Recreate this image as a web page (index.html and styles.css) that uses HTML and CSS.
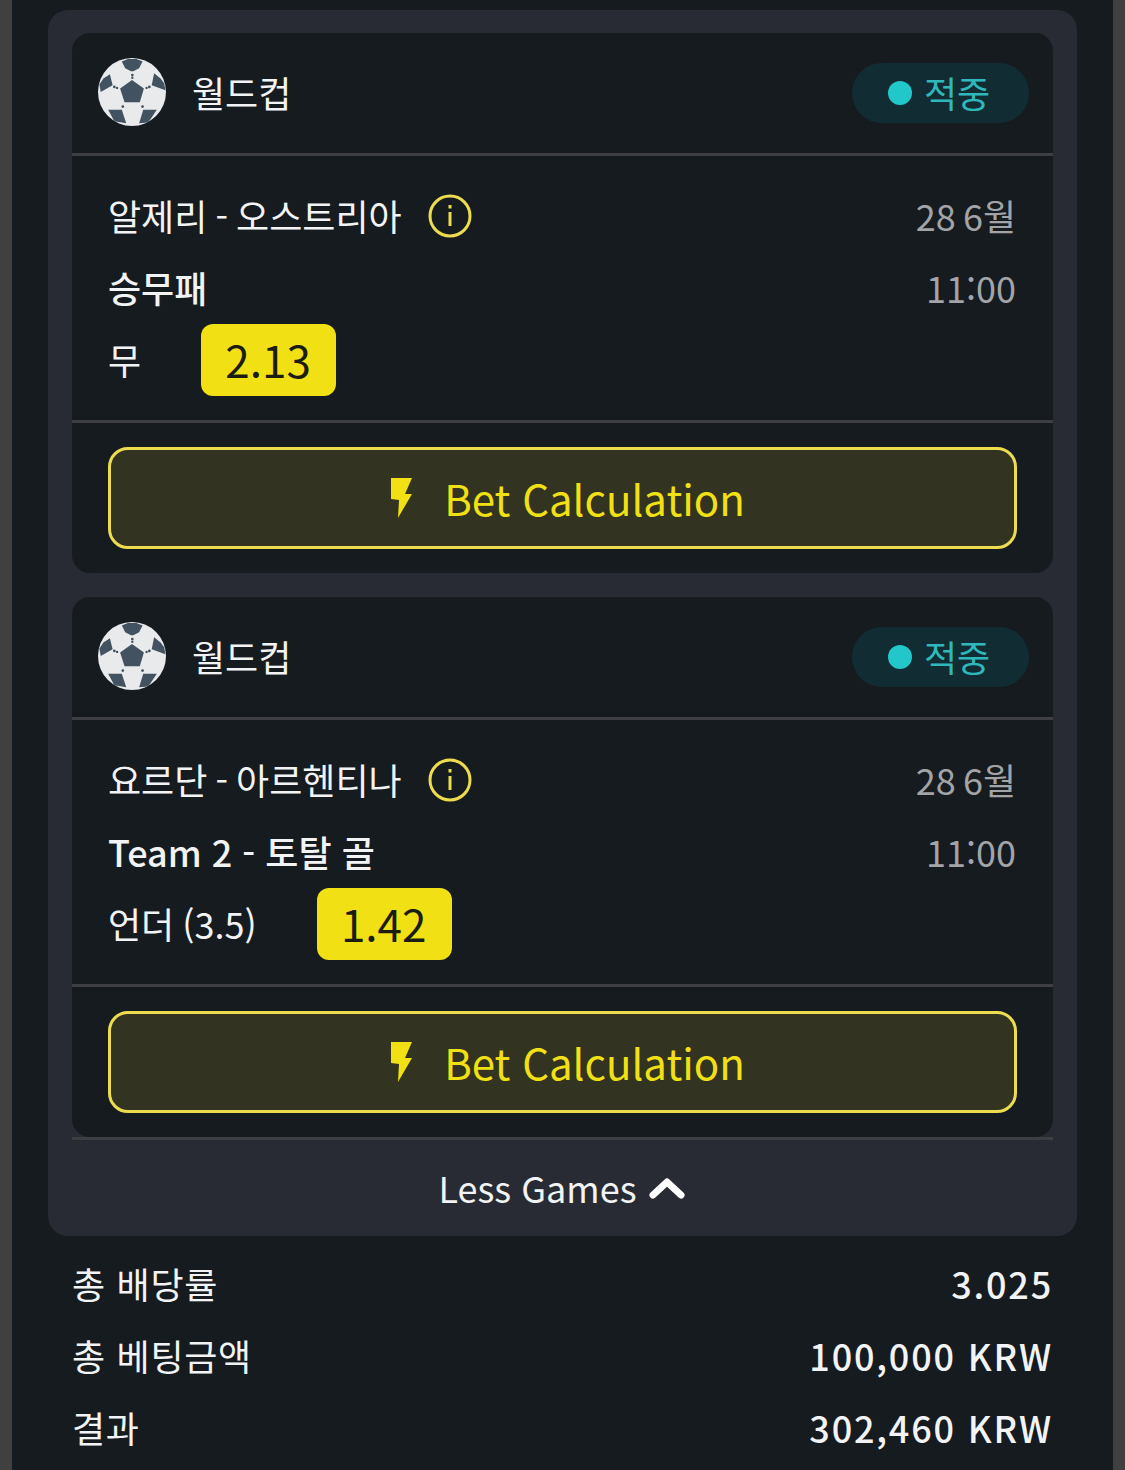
FILE: index.html
```html
<!DOCTYPE html>
<html lang="ko">
<head>
    <meta charset="UTF-8">
    <title>Bet Slip</title>
    <link rel="stylesheet" href="styles.css">
</head>
<body>
    <svg class="sprites" width="0" height="0">
        <symbol id="ball" viewBox="0 0 200 200">
            <clipPath id="ball-clip"><circle cx="100" cy="100" r="100"/></clipPath>
            <circle cx="100" cy="100" r="100" fill="#e9eaec"/>
            <g clip-path="url(#ball-clip)" fill="#435260">
                <polygon points="100,65 135,90 123,130 78,130 65,90"/>
                <polygon points="70,10 88,3 113,3 131,10 121,30 104,39 97,39 80,30"/>
                <polygon points="35,48 43,80 8,100 4,78 16,60"/>
                <polygon points="165,45 158,80 198,95 195,75 184,60"/>
                <polygon points="30,152 70,152 83,192 48,186"/>
                <polygon points="133,152 173,152 148,190 121,192"/>
                <circle cx="101" cy="50" r="4"/>
                <circle cx="101" cy="58" r="3.5"/>
                <circle cx="48" cy="85" r="4"/>
                <circle cx="56" cy="88" r="3.5"/>
                <circle cx="151" cy="85" r="4"/>
                <circle cx="143" cy="88" r="3.5"/>
                <circle cx="73" cy="143" r="4"/>
                <circle cx="131" cy="143" r="4"/>
            </g>
        </symbol>
    </svg>

    <div class="page">
        <div class="panel">
            <div class="match-card">
                <div class="card-head">
                    <svg class="ball"><use href="#ball"/></svg>
                    <span class="league">월드컵</span>
                    <span class="pill"><i class="pill-dot"></i><span class="pill-text">적중</span></span>
                </div>
                <div class="card-body">
                    <div class="row">
                        <div class="teams">
                            <span class="teams-name">알제리 - 오스트리아</span>
                            <svg class="info" viewBox="0 0 44 44">
                                <circle cx="22" cy="22" r="20" fill="none" stroke="#ecdc4e" stroke-width="3"/>
                                <rect x="20.5" y="11" width="3" height="3.5" fill="#ecdc4e"/>
                                <rect x="20.5" y="18" width="3" height="14" fill="#ecdc4e"/>
                            </svg>
                        </div>
                        <span class="date">28 6월</span>
                    </div>
                    <div class="row">
                        <span class="market">승무패</span>
                        <span class="date">11:00</span>
                    </div>
                    <div class="row row-pick">
                        <span class="pick">무</span>
                        <span class="odds">2.13</span>
                    </div>
                </div>
                <div class="card-foot">
                    <button class="calc-btn">
                        <svg class="bolt" viewBox="0 0 21 40"><polygon points="0,0 21,0 14,16 21,16 7,40 8,22 0,21"/></svg>
                        Bet Calculation
                    </button>
                </div>
            </div>

            <div class="match-card">
                <div class="card-head">
                    <svg class="ball"><use href="#ball"/></svg>
                    <span class="league">월드컵</span>
                    <span class="pill"><i class="pill-dot"></i><span class="pill-text">적중</span></span>
                </div>
                <div class="card-body">
                    <div class="row">
                        <div class="teams">
                            <span class="teams-name">요르단 - 아르헨티나</span>
                            <svg class="info" viewBox="0 0 44 44">
                                <circle cx="22" cy="22" r="20" fill="none" stroke="#ecdc4e" stroke-width="3"/>
                                <rect x="20.5" y="11" width="3" height="3.5" fill="#ecdc4e"/>
                                <rect x="20.5" y="18" width="3" height="14" fill="#ecdc4e"/>
                            </svg>
                        </div>
                        <span class="date">28 6월</span>
                    </div>
                    <div class="row">
                        <span class="market">Team 2 - 토탈 골</span>
                        <span class="date">11:00</span>
                    </div>
                    <div class="row row-pick">
                        <span class="pick">언더 (3.5)</span>
                        <span class="odds">1.42</span>
                    </div>
                </div>
                <div class="card-foot">
                    <button class="calc-btn">
                        <svg class="bolt" viewBox="0 0 21 40"><polygon points="0,0 21,0 14,16 21,16 7,40 8,22 0,21"/></svg>
                        Bet Calculation
                    </button>
                </div>
            </div>

            <div class="less-games">
                <span class="less-text">Less Games</span>
                <svg class="chevron" viewBox="0 0 36 22"><polyline points="4,18 18,5 32,18"/></svg>
            </div>
        </div>

        <div class="totals">
            <div class="total-row"><span>총 배당률</span><b>3.025</b></div>
            <div class="total-row"><span>총 베팅금액</span><b>100,000 KRW</b></div>
            <div class="total-row"><span>결과</span><b>302,460 KRW</b></div>
        </div>
    </div>
</body>
</html>
```

FILE: styles.css
```css
body {
    margin: 0;
    height: 1470px;
    overflow: hidden;
    background-color: #404040;
    font-family: "Noto Sans CJK KR", "Noto Sans", sans-serif;
    font-size: 36px;
    color: #f2f3f4;
}
.sprites {
    display: block;
    height: 0;
}
.page {
    margin: 0 12px;
    height: 1470px;
    padding: 10px 36px 0;
    box-sizing: border-box;
    background-color: #161b20;
}
.panel {
    background-color: #282b33;
    border-radius: 20px;
    padding: 23px 24px 0;
}
.match-card {
    background-color: #161b20;
    border-radius: 18px;
    margin-bottom: 24px;
}
.match-card:nth-child(2) {
    margin-bottom: 0;
}
.card-head {
    display: flex;
    align-items: center;
    height: 123px;
    padding: 0 24px 2px 26px;
    box-sizing: border-box;
    border-bottom: 3px solid #3d3f42;
}
.ball {
    width: 68px;
    height: 68px;
    margin-right: 26px;
}
.league {
    flex-grow: 1;
    padding-bottom: 1px;
}
.pill {
    display: flex;
    align-items: center;
    width: 177px;
    height: 60px;
    margin-top: 2px;
    box-sizing: border-box;
    padding-left: 36px;
    border-radius: 30px;
    background-color: #122c34;
    color: #2fb8bb;
}
.pill-dot {
    width: 24px;
    height: 24px;
    margin-right: 12px;
    border-radius: 50%;
    background-color: #22c7ca;
}
.pill-text {
    padding-bottom: 2px;
}
.card-body {
    padding: 24px 37px 24px 36px;
    border-bottom: 3px solid #3d3f42;
}
.row {
    display: flex;
    align-items: center;
    justify-content: space-between;
    height: 72px;
}
.row-pick {
    justify-content: flex-start;
    gap: 60px;
}
.teams {
    display: flex;
    align-items: center;
    gap: 26px;
}
.teams-name {
    padding-bottom: 2px;
    word-spacing: -2px;
}
.info {
    width: 44px;
    height: 44px;
}
.market {
    padding-bottom: 2px;
    font-weight: 500;
}
.date {
    padding-bottom: 2px;
    color: #a2a4a8;
    word-spacing: -3px;
}
.pick {
    padding-bottom: 2px;
    word-spacing: -2px;
}
.odds {
    display: flex;
    align-items: center;
    justify-content: center;
    width: 135px;
    height: 72px;
    padding: 0 1px 2px 0;
    box-sizing: border-box;
    border-radius: 12px;
    background-color: #f0e014;
    color: #1b1d12;
    font-size: 44px;
}
.card-foot {
    padding: 24px 36px;
}
.calc-btn {
    display: flex;
    align-items: center;
    justify-content: center;
    gap: 32px;
    width: 909px;
    height: 102px;
    padding: 0 0 2px 11px;
    box-sizing: border-box;
    border: 3px solid #ecdc4e;
    border-radius: 20px;
    background-color: #323320;
    color: #f0e014;
    font-family: inherit;
    font-size: 42px;
}
.bolt {
    width: 21px;
    height: 40px;
    margin-top: 2px;
    fill: #f0e014;
}
.less-games {
    display: flex;
    align-items: center;
    justify-content: center;
    gap: 12px;
    height: 99px;
    padding-right: 2px;
    box-sizing: border-box;
    border-top: 3px solid #3d3f42;
}
.less-text {
    padding-bottom: 2px;
}
.chevron {
    width: 36px;
    height: 22px;
    fill: none;
    stroke: #fff;
    stroke-width: 7;
    stroke-linecap: round;
    stroke-linejoin: round;
}
.totals {
    padding: 11px 24px 0 24px;
}
.total-row {
    display: flex;
    justify-content: space-between;
    align-items: center;
    height: 72px;
}
.total-row span {
    letter-spacing: 0.7px;
}
.total-row b {
    font-weight: 500;
    letter-spacing: 1.8px;
}
```
